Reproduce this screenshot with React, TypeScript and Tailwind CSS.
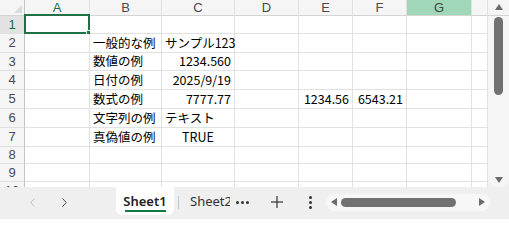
import { ChevronLeft, ChevronRight } from 'lucide-react';

type Align = 'left' | 'right' | 'center';

interface CellValue {
    text: string;
    align: Align;
}

const columns = [
    { id: 'A', width: 'w-[65px]' },
    { id: 'B', width: 'w-[72px]' },
    { id: 'C', width: 'w-[73px]' },
    { id: 'D', width: 'w-[64px]' },
    { id: 'E', width: 'w-[54px]' },
    { id: 'F', width: 'w-[54px]' },
    { id: 'G', width: 'w-[65px]' },
    { id: 'H', width: 'w-[16px]' },
];

const rowHeights = ['h-[18px]', 'h-[19px]', 'h-[18px]', 'h-[19px]', 'h-[19px]', 'h-[19px]', 'h-[19px]', 'h-[17px]', 'h-[18px]', 'h-[19px]'];

// row number -> column id -> value
const data: Record<number, Record<string, CellValue>> = {
    2: { B: { text: '一般的な例', align: 'left' }, C: { text: 'サンプル123', align: 'left' } },
    3: { B: { text: '数値の例', align: 'left' }, C: { text: '1234.560', align: 'right' } },
    4: { B: { text: '日付の例', align: 'left' }, C: { text: '2025/9/19', align: 'right' } },
    5: {
        B: { text: '数式の例', align: 'left' },
        C: { text: '7777.77', align: 'right' },
        E: { text: '1234.56', align: 'right' },
        F: { text: '6543.21', align: 'right' },
    },
    6: { B: { text: '文字列の例', align: 'left' }, C: { text: 'テキスト', align: 'left' } },
    7: { B: { text: '真偽値の例', align: 'left' }, C: { text: 'TRUE', align: 'center' } },
};

const alignClass: Record<Align, string> = {
    left: 'justify-start pl-[3px]',
    right: 'justify-end pr-[3px]',
    center: 'justify-center',
};

function Triangle({ dir }: { dir: 'up' | 'down' | 'left' | 'right' }) {
    const points = {
        up: '0,6 4,0 8,6',
        down: '0,0 8,0 4,6',
        left: '6,0 6,8 0,4',
        right: '0,0 0,8 6,4',
    }[dir];
    const vertical = dir === 'up' || dir === 'down';
    return (
        <svg width={vertical ? 8 : 6} height={vertical ? 6 : 8} className="fill-[#6b6b6b]">
            <polygon points={points} />
        </svg>
    );
}

function HeaderRow() {
    return (
        <div className="flex h-[16px] shrink-0 bg-[#f5f5f5] font-['Liberation_Sans',sans-serif] text-[13px] text-[#4a4a4a]">
            {/* select-all corner */}
            <div className="relative w-[25px] shrink-0 border-r border-b border-r-[#c4c4c4] border-b-[#d4d4d4]">
                <svg width="8" height="8" className="absolute right-[2px] bottom-[2px] fill-[#dadada]">
                    <polygon points="8,0 8,8 0,8" />
                </svg>
            </div>
            {columns.map(col => (
                <div
                    key={col.id}
                    className={`${col.width} flex shrink-0 items-center justify-center border-r border-b border-r-[#e0e0e0] border-b-[#d4d4d4] leading-[15px] ${
                        col.id === 'G' ? 'bg-[#a0d7b8] text-[#444]' : ''
                    } ${col.id === 'A' ? 'text-[#1d6b40]' : ''}`}
                >
                    {col.id === 'H' ? '' : col.id}
                </div>
            ))}
        </div>
    );
}

function GridRow({ row }: { row: number }) {
    const cells = data[row] || {};
    const selected = row === 1;
    return (
        <div className={`flex shrink-0 ${rowHeights[row - 1]}`}>
            <div
                className={`w-[25px] shrink-0 flex items-center justify-center border-r border-b border-r-[#c4c4c4] border-b-[#dedede] font-['Liberation_Sans',sans-serif] text-[13px] leading-[16px] ${
                    selected ? 'bg-[#e2e2e2] text-[#1d6b40]' : 'bg-[#f5f5f5] text-[#4a4a4a]'
                }`}
            >
                {row}
            </div>
            {columns.map(col => {
                const cell = cells[col.id];
                return (
                    <div
                        key={col.id}
                        className={`${col.width} relative shrink-0 flex items-center border-r border-b border-[#e1e1e1] bg-white text-[12.5px] text-black whitespace-nowrap ${
                            cell ? alignClass[cell.align] : ''
                        }`}
                    >
                        {cell?.text}
                        {selected && col.id === 'A' && (
                            <div className="absolute -top-[2px] -left-[1px] -right-[1px] -bottom-[1px] border-2 border-[#1e7145]">
                                <div className="absolute -right-[4px] -bottom-[4px] w-[6px] h-[6px] bg-[#1e7145] border border-white" />
                            </div>
                        )}
                    </div>
                );
            })}
        </div>
    );
}

export default function App() {
    const rows = [1, 2, 3, 4, 5, 6, 7, 8, 9, 10];
    return (
        <div className="w-[509px] h-[219px] overflow-hidden bg-[#efefef] flex flex-col font-['Noto_Sans_CJK_JP',sans-serif]">
            <div className="flex h-[187px] shrink-0">
                {/* Grid */}
                <div className="w-[488px] flex flex-col overflow-hidden bg-white">
                    <HeaderRow />
                    {rows.map(r => (
                        <GridRow key={r} row={r} />
                    ))}
                </div>
                {/* Vertical scrollbar */}
                <div className="w-[21px] flex flex-col">
                    <div className="h-[16px] shrink-0 bg-[#f5f5f5] border-b border-[#d4d4d4]" />
                    <div className="flex-1 flex flex-col items-center bg-[#f5f5f5] rounded-b-lg pb-[2px]">
                        <div className="h-0 relative w-full flex justify-center">
                            <div className="absolute -top-[12px]">
                                <Triangle dir="up" />
                            </div>
                        </div>
                        <div className="mt-[1px] w-[9px] h-[78px] rounded-full bg-[#717171]" />
                        <div className="flex-1" />
                        <div className="mb-[2px]">
                            <Triangle dir="down" />
                        </div>
                    </div>
                </div>
            </div>

            {/* Tab bar */}
            <div className="flex-1 flex items-start text-[13px] font-['Noto_Sans',sans-serif]">
                <div className="flex items-center h-[30px] w-[116px] pl-[25px] gap-[17px]">
                    <ChevronLeft size={15} strokeWidth={1.4} className="text-[#b3b3b3]" />
                    <ChevronRight size={15} strokeWidth={1.4} className="text-[#333]" />
                </div>
                <div className="w-[58px] h-[28px] bg-white rounded-b-md flex flex-col items-center justify-center">
                    <span className="font-semibold text-[#222] leading-[16px] mt-[2px]">Sheet1</span>
                    <div className="w-[41px] h-[2px] bg-[#107c41] mt-[1px]" />
                </div>
                <div className="flex items-center h-[30px]">
                    <div className="ml-[4px] w-px h-[13px] bg-[#c8c8c8]" />
                    <div className="ml-[11px] w-[40px] overflow-hidden whitespace-nowrap text-[#333]">Sheet2</div>
                    <div className="ml-[6px] flex gap-[2px]">
                        <span className="w-[3px] h-[3px] rounded-full bg-[#333]" />
                        <span className="w-[3px] h-[3px] rounded-full bg-[#333]" />
                        <span className="w-[3px] h-[3px] rounded-full bg-[#333]" />
                    </div>
                    <svg width="12" height="12" className="ml-[22px] stroke-[#333]" strokeWidth="1.2">
                        <line x1="6" y1="0" x2="6" y2="12" />
                        <line x1="0" y1="6" x2="12" y2="6" />
                    </svg>
                    <div className="ml-[26px] flex flex-col gap-[2px]">
                        <span className="w-[3px] h-[3px] rounded-full bg-[#333]" />
                        <span className="w-[3px] h-[3px] rounded-full bg-[#333]" />
                        <span className="w-[3px] h-[3px] rounded-full bg-[#333]" />
                    </div>
                    {/* Horizontal scrollbar */}
                    <div className="ml-[14px] w-[164px] h-[17px] rounded-full bg-[#f7f7f7] flex items-center px-[5px]">
                        <Triangle dir="left" />
                        <div className="ml-[4px] w-[115px] h-[9px] rounded-full bg-[#717171]" />
                        <div className="flex-1" />
                        <Triangle dir="right" />
                    </div>
                </div>
            </div>
        </div>
    );
}
